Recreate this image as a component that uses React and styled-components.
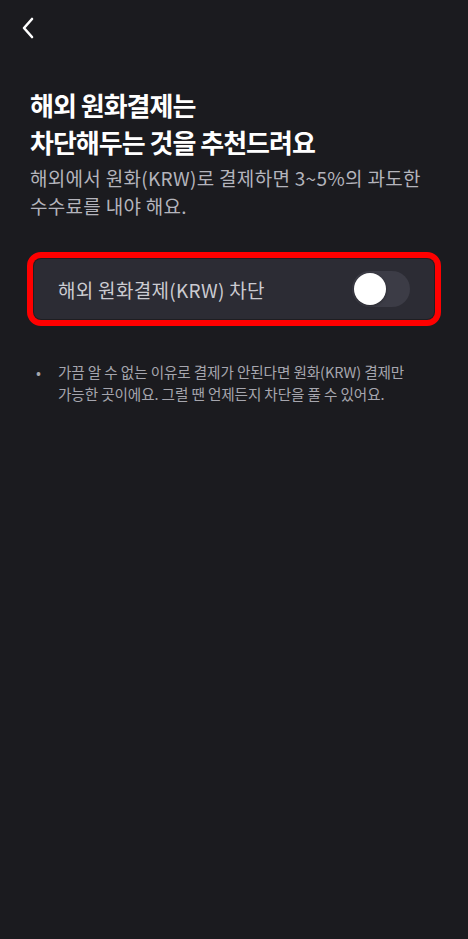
import React, { useState } from "react";
import styled, { createGlobalStyle } from "styled-components";

const GlobalStyle = createGlobalStyle`
  html, body {
    margin: 0;
    padding: 0;
    background: #1b1b1f;
  }
  body {
    font-family: "Noto Sans CJK KR", "Noto Sans", sans-serif;
    -webkit-font-smoothing: antialiased;
    word-break: keep-all;
  }
  * {
    box-sizing: border-box;
  }
`;

const Page = styled.div`
  width: 468px;
  min-height: 939px;
  background: #1b1b1f;
  display: flex;
  flex-direction: column;
`;

const TopBar = styled.div`
  height: 56px;
  display: flex;
  align-items: center;
  padding: 0 0 0 18px;
`;

const BackButton = styled.button`
  width: 20px;
  height: 24px;
  padding: 0;
  border: none;
  background: none;
  display: flex;
  align-items: center;
  justify-content: center;
  cursor: pointer;
`;

const Content = styled.div`
  padding: 30px 30px 0 30px;
  display: flex;
  flex-direction: column;
`;

const Title = styled.h1`
  margin: 0;
  font-size: 26px;
  line-height: 37px;
  font-weight: 700;
  color: #ffffff;
  letter-spacing: -1px;
`;

const Description = styled.p`
  margin: 4px 0 0 0;
  font-size: 19px;
  line-height: 28px;
  font-weight: 400;
  color: #b4b4bc;
  letter-spacing: 0.3px;
`;

const Highlight = styled.div`
  margin: 32px -3px 0 -3px;
  border: 7px solid #ff0000;
  border-radius: 14px;
`;

const OptionRow = styled.div`
  height: 60px;
  display: flex;
  align-items: center;
  justify-content: space-between;
  padding: 0 24px 0 24px;
  background: #2c2c34;
  border-radius: 7px;
  box-shadow: 0 0 0 1px #1e1e22;
`;

const OptionLabel = styled.span`
  font-size: 19px;
  color: #cbcbd1;
  letter-spacing: 0.3px;
`;

const Track = styled.button`
  width: 58px;
  height: 36px;
  padding: 2px;
  border: none;
  border-radius: 18px;
  background: ${({ on }) => (on ? "#3182f6" : "#3c3c46")};
  display: flex;
  justify-content: ${({ on }) => (on ? "flex-end" : "flex-start")};
  align-items: center;
  cursor: pointer;
`;

const Knob = styled.span`
  width: 32px;
  height: 32px;
  border-radius: 50%;
  background: #ffffff;
  box-shadow: 0 1px 3px rgba(0, 0, 0, 0.35);
`;

const Notes = styled.ul`
  margin: 35px 0 0 0;
  padding: 0;
  list-style: none;
`;

const Note = styled.li`
  display: flex;
  font-size: 14.6px;
  line-height: 22px;
  color: #a6a6ae;
  letter-spacing: -0.1px;
`;

const Bullet = styled.span`
  width: 28px;
  flex-shrink: 0;
  padding-left: 6px;
`;

const App = () => {
  const [blocked, setBlocked] = useState(false);

  return (
    <Page>
      <GlobalStyle />
      <TopBar>
        <BackButton aria-label="뒤로">
          <svg width="14" height="22" viewBox="0 0 14 22" fill="none">
            <path d="M11 2 L3 11 L11 20" stroke="#ffffff" strokeWidth="2.6" strokeLinecap="round" strokeLinejoin="round" />
          </svg>
        </BackButton>
      </TopBar>
      <Content>
        <Title>
          해외 원화결제는
          <br />
          차단해두는 것을 추천드려요
        </Title>
        <Description>해외에서 원화(KRW)로 결제하면 3~5%의 과도한 수수료를 내야 해요.</Description>
        <Highlight>
          <OptionRow>
            <OptionLabel>해외 원화결제(KRW) 차단</OptionLabel>
            <Track on={blocked ? 1 : 0} onClick={() => setBlocked(!blocked)}>
              <Knob />
            </Track>
          </OptionRow>
        </Highlight>
        <Notes>
          <Note>
            <Bullet>•</Bullet>
            <span>가끔 알 수 없는 이유로 결제가 안된다면 원화(KRW) 결제만 가능한 곳이에요. 그럴 땐 언제든지 차단을 풀 수 있어요.</span>
          </Note>
        </Notes>
      </Content>
    </Page>
  );
};

export default App;
